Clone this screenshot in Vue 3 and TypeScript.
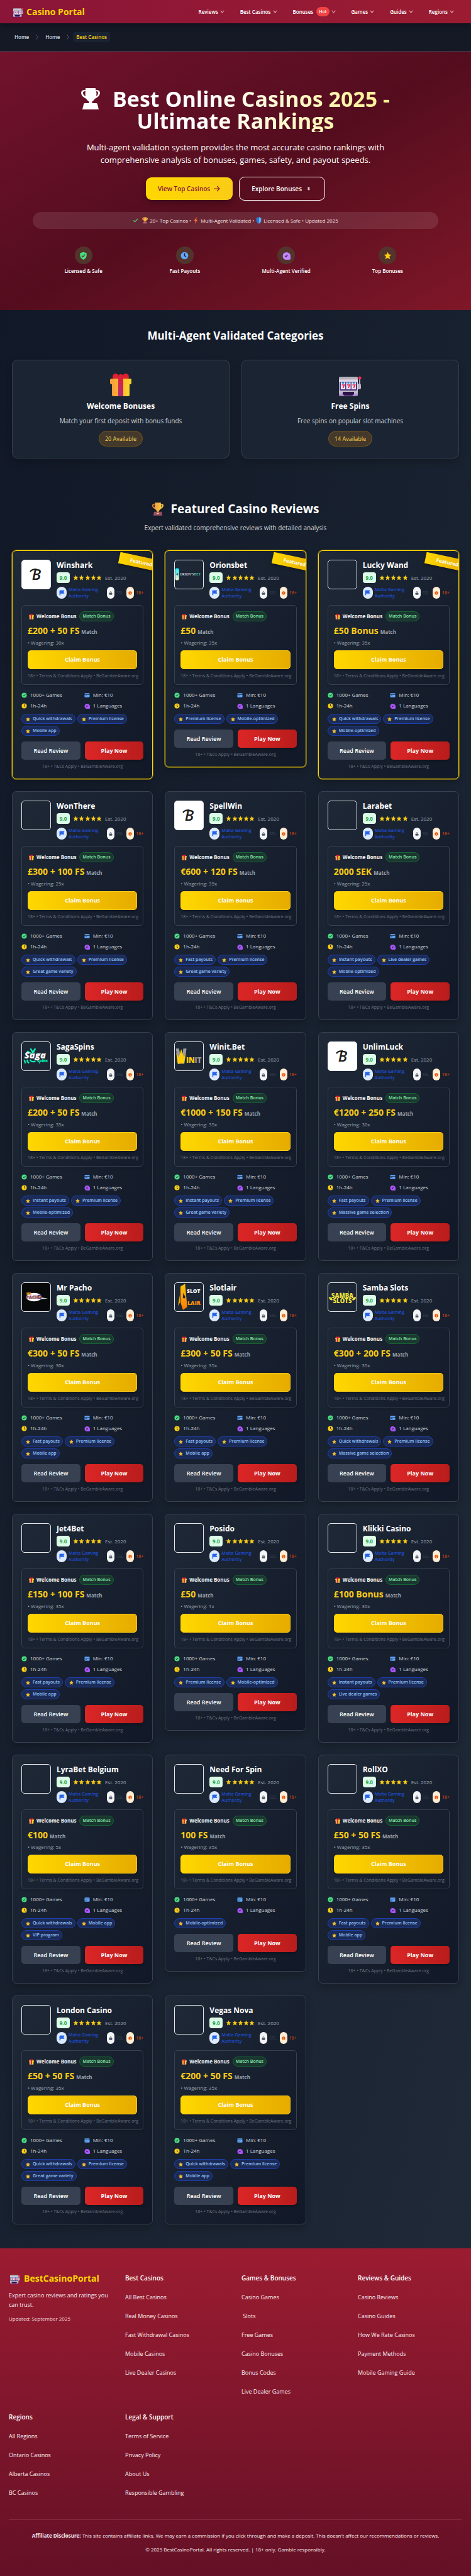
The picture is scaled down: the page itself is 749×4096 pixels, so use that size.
<script setup lang="ts">
type Logo = 'none' | 'script' | 'orion' | 'saga' | 'winit' | 'pacho' | 'slotlair' | 'samba'

interface Casino {
  name: string
  amount: string
  wagering: string
  tags: string[]
  logo: Logo
  featured?: boolean
}

interface FooterColumn {
  title: string
  links: string[]
}

const navItems: { label: string; hot?: boolean }[] = [
  { label: 'Reviews' },
  { label: 'Best Casinos' },
  { label: 'Bonuses', hot: true },
  { label: 'Games' },
  { label: 'Guides' },
  { label: 'Regions' },
]

const trustItems = [
  { icon: 'shield-check', label: 'Licensed & Safe', tone: 'green' },
  { icon: 'clock', label: 'Fast Payouts', tone: 'blue' },
  { icon: 'verified', label: 'Multi-Agent Verified', tone: 'purple' },
  { icon: 'star', label: 'Top Bonuses', tone: 'gold' },
]

const categories = [
  { icon: 'gift', title: 'Welcome Bonuses', text: 'Match your first deposit with bonus funds', count: '20 Available' },
  { icon: 'slot', title: 'Free Spins', text: 'Free spins on popular slot machines', count: '14 Available' },
]

const quick = 'Quick withdrawals'
const fast = 'Fast payouts'
const instant = 'Instant payouts'
const premium = 'Premium license'
const app = 'Mobile app'
const optimized = 'Mobile-optimized'
const variety = 'Great game variety'
const dealers = 'Live dealer games'
const massive = 'Massive game selection'

const casinos: Casino[] = [
  { name: 'Winshark', amount: '£200 + 50 FS', wagering: '30x', tags: [quick, premium, app], logo: 'script', featured: true },
  { name: 'Orionsbet', amount: '£50', wagering: '35x', tags: [premium, optimized], logo: 'orion', featured: true },
  { name: 'Lucky Wand', amount: '£50 Bonus', wagering: '35x', tags: [quick, premium, optimized], logo: 'none', featured: true },
  { name: 'WonThere', amount: '£300 + 100 FS', wagering: '25x', tags: [quick, premium, variety], logo: 'none' },
  { name: 'SpellWin', amount: '€600 + 120 FS', wagering: '35x', tags: [fast, premium, variety], logo: 'script' },
  { name: 'Larabet', amount: '2000 SEK', wagering: '25x', tags: [instant, dealers, optimized], logo: 'none' },
  { name: 'SagaSpins', amount: '£200 + 50 FS', wagering: '35x', tags: [instant, premium, optimized], logo: 'saga' },
  { name: 'Winit.Bet', amount: '€1000 + 150 FS', wagering: '35x', tags: [instant, premium, variety], logo: 'winit' },
  { name: 'UnlimLuck', amount: '€1200 + 250 FS', wagering: '30x', tags: [fast, premium, massive], logo: 'script' },
  { name: 'Mr Pacho', amount: '€300 + 50 FS', wagering: '30x', tags: [fast, premium, app], logo: 'pacho' },
  { name: 'Slotlair', amount: '£300 + 50 FS', wagering: '35x', tags: [fast, premium, app], logo: 'slotlair' },
  { name: 'Samba Slots', amount: '€300 + 200 FS', wagering: '35x', tags: [quick, premium, massive], logo: 'samba' },
  { name: 'Jet4Bet', amount: '£150 + 100 FS', wagering: '35x', tags: [fast, premium, app], logo: 'none' },
  { name: 'Posido', amount: '£50', wagering: '1x', tags: [premium, optimized], logo: 'none' },
  { name: 'Klikki Casino', amount: '£100 Bonus', wagering: '30x', tags: [instant, premium, dealers], logo: 'none' },
  { name: 'LyraBet Belgium', amount: '€100', wagering: '5x', tags: [quick, app, 'VIP program'], logo: 'none' },
  { name: 'Need For Spin', amount: '100 FS', wagering: '35x', tags: [optimized], logo: 'none' },
  { name: 'RollXO', amount: '£50 + 50 FS', wagering: '35x', tags: [fast, premium, app], logo: 'none' },
  { name: 'London Casino', amount: '£50 + 50 FS', wagering: '35x', tags: [quick, premium, variety], logo: 'none' },
  { name: 'Vegas Nova', amount: '€200 + 50 FS', wagering: '35x', tags: [quick, premium, app], logo: 'none' },
]

const footerColumns: FooterColumn[] = [
  { title: 'Best Casinos', links: ['All Best Casinos', 'Real Money Casinos', 'Fast Withdrawal Casinos', 'Mobile Casinos', 'Live Dealer Casinos'] },
  { title: 'Games & Bonuses', links: ['Casino Games', '\u00a0Slots', 'Free Games', 'Casino Bonuses', 'Bonus Codes', 'Live Dealer Games'] },
  { title: 'Reviews & Guides', links: ['Casino Reviews', 'Casino Guides', 'How We Rate Casinos', 'Payment Methods', 'Mobile Gaming Guide'] },
  { title: 'Regions', links: ['All Regions', 'Ontario Casinos', 'Alberta Casinos', 'BC Casinos'] },
  { title: 'Legal & Support', links: ['Terms of Service', 'Privacy Policy', 'About Us', 'Responsible Gambling'] },
]
</script>

<template>
  <div class="page">
    <svg class="sprite" aria-hidden="true">
      <defs>
        <linearGradient id="g-gift" x1="0" x2="1"><stop offset="0" stop-color="#f89a3c" /><stop offset="1" stop-color="#fbd62c" /></linearGradient>
        <linearGradient id="g-ribbon" x1="0" y1="0" x2="0" y2="1"><stop offset="0" stop-color="#e0202f" /><stop offset="1" stop-color="#b52a78" /></linearGradient>
        <linearGradient id="g-slot" x1="0" y1="0" x2="0" y2="1"><stop offset="0" stop-color="#b4b0ba" /><stop offset="0.8" stop-color="#c3bdca" /><stop offset="1" stop-color="#a57bcf" /></linearGradient>
        <linearGradient id="g-cup" x1="0" x2="1"><stop offset="0" stop-color="#f08a3c" /><stop offset="1" stop-color="#fbd840" /></linearGradient>
        <linearGradient id="g-orion" x1="0" y1="0" x2="0" y2="1"><stop offset="0" stop-color="#16efff" /><stop offset="1" stop-color="#fdf3cf" /></linearGradient>
        <linearGradient id="g-lair" x1="0" y1="0" x2="0" y2="1"><stop offset="0" stop-color="#ffc60a" /><stop offset="1" stop-color="#ff7a00" /></linearGradient>
      </defs>
      <symbol id="i-gift" viewBox="0 0 34 36">
        <ellipse cx="9" cy="5" rx="5" ry="5" fill="#e0202f" /><ellipse cx="25" cy="5" rx="5" ry="5" fill="#e0202f" />
        <rect x="3" y="14" width="28" height="22" rx="2" fill="url(#g-gift)" />
        <rect x="0" y="8" width="34" height="9" rx="2" fill="url(#g-gift)" />
        <path d="M13 36V5q0-4 4-4t4 4v31z" fill="url(#g-ribbon)" />
      </symbol>
      <symbol id="i-slot" viewBox="0 0 36 36">
        <path d="M32 8h2v14h-2z" fill="#a8a4b0" /><circle cx="33" cy="7" r="2.5" fill="#ee2e50" />
        <path d="M29 16h4q2 0 2 3v4q0 2-2 2h-4z" fill="#b9b5c0" />
        <rect y="5" width="30" height="31" rx="2" fill="url(#g-slot)" /><rect y="9.500" width="30" height="17" fill="#dcd6e6" />
        <rect x="1" y="13" width="28" height="14" rx="1.500" fill="#4b3a80" />
        <path d="M3 14h7v11H3zM11.500 14h7v11h-7zM20 14h7v11h-7z" fill="#ece7f6" />
        <path d="M5 14h3v2H5zM13.500 14h3v2h-3zM22 14h3v2h-3z" fill="#229ee6" />
        <path d="M4.500 18h4l-2 5M13 18h4l-2 5M21.500 18h4l-2 5" fill="none" stroke="#ee2048" stroke-width="1.700" />
        <path d="M6 29h18v3q-1 3-3 3H9q-2 0-3-3z" fill="#2a1449" />
      </symbol>
      <symbol id="i-cup" viewBox="0 0 30 34">
        <path d="M7 0h16v3h1q6 0 6 5t-8 9q-3 4-5 5l1 3h-6l1-3q-2-1-5-5-8-4-8-9t6-5h1zM6 5q-3 0-3 3t4 5q-1-4 0-8zM24 5q1 4 0 8 3-2 3-5t-3-3z" fill="url(#g-cup)" fill-rule="evenodd" />
        <path d="M5 24h20l2 10H3z" fill="#95506a" /><rect x="12" y="27" width="6" height="3" fill="#fbc83c" />
      </symbol>
      <symbol id="i-cup-plain" viewBox="0 0 30 34">
        <path d="M7 0h16v3h1q6 0 6 5t-8 9q-3 4-5 5l1 2h6q2 0 2 2l2 8H2l2-8q0-2 2-2h6l1-2q-2-1-5-5-8-4-8-9t6-5h1zM6 5q-3 0-3 3t4 5q-1-4 0-8zM24 5q1 4 0 8 3-2 3-5t-3-3z" fill="#fff" fill-rule="evenodd" />
      </symbol>
      <symbol id="i-chevron" viewBox="0 0 8 8"><path d="M1 2l3 4 3-4" fill="none" stroke="currentColor" /></symbol>
      <symbol id="i-next" viewBox="0 0 8 12"><path d="M2 1l4 5-4 5" fill="none" stroke="currentColor" /></symbol>
      <symbol id="i-arrow" viewBox="0 0 12 12"><path d="M1 6h9M6 2l4 4-4 4" fill="none" stroke="currentColor" stroke-width="1.200" /></symbol>
      <symbol id="i-check" viewBox="0 0 20 20"><path d="M3 10l5 5L18 4" fill="none" stroke="currentColor" stroke-width="2.500" /></symbol>
      <symbol id="i-bolt" viewBox="0 0 12 20"><path d="M8 0L1 11h4L3 20l8-12H7z" fill="#f9713a" /></symbol>
      <symbol id="i-shield" viewBox="0 0 16 20"><path d="M8 0l7 3v8q-1 6-7 9z" fill="#54b8f5" /><path d="M8 0L1 3v8q1 6 7 9z" fill="#2c78dc" /></symbol>
      <symbol id="i-shield-check" viewBox="0 0 20 20">
        <path d="M10 1l8 3v6q-1 7-8 10-7-3-8-10V4z" fill="currentColor" /><path d="M6 10l3 3 5-6" fill="none" stroke="#53342c" stroke-width="2" />
      </symbol>
      <symbol id="i-clock" viewBox="0 0 20 20"><circle cx="10" cy="10" r="9" fill="currentColor" /><path d="M10 4v6l4 4" fill="none" stroke="#1d2636" stroke-width="2.200" /></symbol>
      <symbol id="i-verified" viewBox="0 0 20 20">
        <path d="M10 2c6 0 10 4 10 9v6q0 3-3 3h-7C4 20 1 16 1 11S4 2 10 2z" fill="currentColor" /><path d="M7 11l2 3 4-5-2 1z" fill="#2c2140" stroke="#2c2140" />
      </symbol>
      <symbol id="i-star" viewBox="0 0 20 20"><path d="M10 1l2.700 6 6.300.6-4.800 4.200L15.700 19 10 15.400 4.300 19l1.500-7.200L1 7.600 7.300 7z" fill="currentColor" /></symbol>
      <symbol id="i-soft-star" viewBox="0 0 20 20"><path d="M10 2l2.500 5.200 5.500.8-4 4 1 6-5-2.500L5 18l1-6-4-4 5.500-.8z" fill="#f2c230" stroke="#f2c230" stroke-width="2" stroke-linejoin="round" /></symbol>
      <symbol id="i-flag" viewBox="0 0 20 20"><path d="M2 3q0-1 1-1h15l-3 5 3 5H4v6H2z" fill="#2563eb" stroke="#2563eb" stroke-width="1.500" stroke-linejoin="round" /></symbol>
      <symbol id="i-lock" viewBox="0 0 20 20"><rect x="2" y="9" width="16" height="10" rx="2" fill="#4b5563" /><path d="M6 10V6q0-4 4-4t4 4v4" fill="none" stroke="#4b5563" stroke-width="2.500" /></symbol>
      <symbol id="i-info" viewBox="0 0 20 20"><circle cx="10" cy="10" r="9" fill="#ea580c" /><path d="M8 9h3v6M8 15h5M9 5h2" fill="none" stroke="#ffedd5" stroke-width="2" /></symbol>
      <symbol id="i-ok" viewBox="0 0 20 20"><circle cx="10" cy="10" r="9" fill="#4ade80" /><path d="M6 10l3 3 5-6" fill="none" stroke="#172030" stroke-width="2.200" /></symbol>
      <symbol id="i-card" viewBox="0 0 20 20"><path d="M1 5q0-2 2-2h14q2 0 2 2v2H1zM1 9h18v6q0 2-2 2H3q-2 0-2-2z" fill="#60a5fa" /><path d="M4 12h5" stroke="#1d3a68" stroke-width="2" /></symbol>
    </svg>

    <header class="topbar">
      <a class="brand" href="#"><svg class="brand-icon"><use href="#i-slot" /></svg>Casino Portal</a>
      <nav class="menu" aria-label="Main">
        <button v-for="item in navItems" :key="item.label" type="button" class="menu-item">
          {{ item.label }}
          <span v-if="item.hot" class="hot">Hot</span>
          <svg class="chevron"><use href="#i-chevron" /></svg>
        </button>
      </nav>
    </header>

    <nav class="crumbs" aria-label="Breadcrumb">
      <a href="#">Home</a>
      <svg><use href="#i-next" /></svg>
      <a href="#">Home</a>
      <svg><use href="#i-next" /></svg>
      <span class="current">Best Casinos</span>
    </nav>

    <section class="hero">
      <h1><svg class="hero-cup"><use href="#i-cup-plain" /></svg>Best Online Casinos 2025 - Ultimate Rankings</h1>
      <p class="lead">Multi-agent validation system provides the most accurate casino rankings with comprehensive analysis of bonuses, games, safety, and payout speeds.</p>
      <div class="hero-actions">
        <a class="cta solid" href="#">View Top Casinos <svg class="cta-icon"><use href="#i-arrow" /></svg></a>
        <a class="cta outline" href="#">Explore Bonuses <span class="coin">$</span></a>
      </div>
      <p class="trust-bar">
        <svg class="tick"><use href="#i-check" /></svg>
        <svg><use href="#i-cup" /></svg>20+ Top Casinos •
        <svg><use href="#i-bolt" /></svg>Multi-Agent Validated •
        <svg><use href="#i-shield" /></svg>Licensed &amp; Safe • Updated 2025
      </p>
      <ul class="trust-grid">
        <li v-for="item in trustItems" :key="item.label">
          <span class="orb" :class="item.tone"><svg><use :href="'#i-' + item.icon" /></svg></span>
          {{ item.label }}
        </li>
      </ul>
    </section>

    <main class="content">
      <h2 class="cat-title">Multi-Agent Validated Categories</h2>
      <div class="cat-grid">
        <a v-for="cat in categories" :key="cat.title" class="cat" href="#">
          <svg class="cat-icon"><use :href="'#i-' + cat.icon" /></svg>
          <h3>{{ cat.title }}</h3>
          <p>{{ cat.text }}</p>
          <span class="count">{{ cat.count }}</span>
        </a>
      </div>

      <h2 class="review-title"><svg><use href="#i-cup" /></svg>Featured Casino Reviews</h2>
      <p class="review-sub">Expert validated comprehensive reviews with detailed analysis</p>

      <div class="reviews">
        <article v-for="c in casinos" :key="c.name" class="review" :class="{ featured: c.featured }">
          <div v-if="c.featured" class="ribbon">Featured</div>
          <div class="head">
            <div class="logo" :class="c.logo">
              <svg v-if="c.logo === 'script'" viewBox="0 0 80 80">
                <text x="41" y="55" text-anchor="middle" font-size="42" font-style="italic" font-weight="600" fill="#1c1c1c">B</text>
                <path d="M24 31q4-6 16-6" fill="none" stroke="#1c1c1c" stroke-width="4" stroke-linecap="round" />
              </svg>
              <svg v-else-if="c.logo === 'orion'" viewBox="0 0 80 80">
                <rect x="1" y="22" width="11" height="34" rx="5" fill="url(#g-orion)" />
                <path d="M7 34l1 4 3 1-3 1-1 4-1-4-3-1 3-1z" fill="#12202e" />
                <text x="14" y="43" font-size="10" font-family="Liberation Serif, serif" fill="#fff">ORION’S<tspan fill="#6fe0d8">BET</tspan></text>
              </svg>
              <svg v-else-if="c.logo === 'saga'" viewBox="0 0 80 80">
                <path d="M24 18l7 12M14 26l12 6M38 18q-6 6-5 12M6 50l4 10M16 50q-3 6 4 9M22 50q6 8 16 4" fill="none" stroke="#06f5b4" stroke-width="4" />
                <text x="37" y="46" text-anchor="middle" font-size="26" font-style="italic" font-weight="800" fill="#fff">Saga</text>
                <text x="58" y="56" text-anchor="middle" font-size="12" font-style="italic" font-weight="800" fill="#06f5b4">spins</text>
              </svg>
              <svg v-else-if="c.logo === 'winit'" viewBox="0 0 80 80">
                <path d="M3 18h9l6 35 1 8-10 1z" fill="#9b9b9b" /><path d="M24 18h9l-6 43h-9z" fill="#9b9b9b" />
                <path d="M4 30l7 14 7-24 8 23 5-12-5 30-8-1-10 1z" fill="#ffcd05" />
                <text x="32" y="59" font-size="21" font-weight="800" fill="#ffcd05">IN</text>
                <text x="56" y="59" font-size="21" font-weight="800" fill="#9b9b9b">IT</text>
              </svg>
              <svg v-else-if="c.logo === 'pacho'" viewBox="0 0 80 80">
                <ellipse cx="34" cy="40" rx="22" ry="12" fill="#fff" /><path d="M50 40l23 4-20 2z" fill="#ddd" />
                <circle cx="50" cy="39" r="6" fill="#53308c" /><circle cx="50" cy="39" r="3" fill="#f49b24" />
                <text x="20" y="34" text-anchor="middle" font-size="8" font-weight="800" fill="#f49b24">MR.</text>
                <text x="29" y="45" text-anchor="middle" font-size="13" font-weight="800" fill="#f08c1c" stroke="#53308c" stroke-width="1">PACH</text>
              </svg>
              <svg v-else-if="c.logo === 'slotlair'" viewBox="0 0 80 80">
                <path d="M16 10l13-8 6 66-12 8-7-22z" fill="url(#g-lair)" /><path d="M14 34v22l-5 9z" fill="#ffbd0a" />
                <path d="M24 28l6 12-3 4-4-2z" fill="#18202e" />
                <text x="53" y="28" text-anchor="middle" font-size="15" font-weight="800" fill="#fff">SLOT</text>
                <text x="54" y="62" text-anchor="middle" font-size="16" font-weight="800" fill="#ff9407">LAIR</text>
              </svg>
              <svg v-else-if="c.logo === 'samba'" viewBox="0 0 80 80">
                <path d="M2 40q8 0 10 8-8 2-10-8zM78 40q-8 0-10 8 8 2 10-8zM8 30l4 3M32 25l5 3M44 26v3M58 23l-2 6M70 31l2 2" fill="#f0e13c" stroke="#f0e13c" />
                <text x="40" y="42" text-anchor="middle" font-size="17" font-weight="800" fill="#f0e13c">SAMBA</text>
                <text x="40" y="56" text-anchor="middle" font-size="17" font-weight="800" fill="#f0e13c">SLOTS</text>
              </svg>
            </div>
            <div class="info">
              <h3>{{ c.name }}</h3>
              <div class="rating">
                <span class="score">9.0</span>
                <span class="stars"><svg v-for="n in 5" :key="n"><use href="#i-star" /></svg></span>
                <span class="est">Est. 2020</span>
              </div>
              <div class="badges">
                <span class="badge license"><i class="chip"><svg><use href="#i-flag" /></svg></i><span>Malta Gaming Authority</span></span>
                <span class="badge ssl"><i class="chip"><svg><use href="#i-lock" /></svg></i>SSL</span>
                <span class="badge adult"><i class="chip"><svg><use href="#i-info" /></svg></i>18+</span>
              </div>
            </div>
          </div>

          <div class="bonus">
            <div class="bonus-head"><svg><use href="#i-gift" /></svg><strong>Welcome Bonus</strong><span class="match">Match Bonus</span></div>
            <div class="amount">{{ c.amount }}<small>Match</small></div>
            <div class="wagering">• Wagering: {{ c.wagering }}</div>
            <a class="claim" href="#">Claim Bonus</a>
            <p class="terms">18+ • Terms &amp; Conditions Apply • BeGambleAware.org</p>
          </div>

          <ul class="stats">
            <li><svg><use href="#i-ok" /></svg>1000+ Games</li>
            <li><svg><use href="#i-card" /></svg>Min: €10</li>
            <li class="gold"><svg><use href="#i-clock" /></svg>1h-24h</li>
            <li class="violet"><svg><use href="#i-verified" /></svg>1 Languages</li>
          </ul>
          <ul class="tags">
            <li v-for="t in c.tags" :key="t"><svg><use href="#i-soft-star" /></svg>{{ t }}</li>
          </ul>
          <div class="actions">
            <a class="read" href="#">Read Review</a>
            <a class="play" href="#">Play Now</a>
          </div>
          <p class="terms">18+ • T&amp;Cs Apply • BeGambleAware.org</p>
        </article>
      </div>
    </main>

    <footer class="footer">
      <div class="footer-grid">
        <div>
          <a class="footer-brand" href="#"><svg class="brand-icon"><use href="#i-slot" /></svg>BestCasinoPortal</a>
          <p class="about">Expert casino reviews and ratings you can trust.</p>
          <p class="updated">Updated: September 2025</p>
        </div>
        <div v-for="col in footerColumns" :key="col.title">
          <h4>{{ col.title }}</h4>
          <ul class="links">
            <li v-for="l in col.links" :key="l"><a href="#">{{ l }}</a></li>
          </ul>
        </div>
      </div>
      <div class="legal">
        <p><strong>Affiliate Disclosure:</strong> This site contains affiliate links. We may earn a commission if you click through and make a deposit. This doesn't affect our recommendations or reviews.</p>
        <p>© 2025 BestCasinoPortal. All rights reserved. | 18+ only. Gamble responsibly.</p>
      </div>
    </footer>
  </div>
</template>

<style>
body {
  margin: 0;
  background: #111827;
}
</style>

<style scoped>
.page {
  font-family: "Open Sans", "Noto Sans", sans-serif;
  font-size: 8px;
  line-height: 12px;
  color: #fff;
}
.page * {
  box-sizing: border-box;
}
.sprite {
  position: absolute;
  width: 0;
  height: 0;
}
h1, h2, h3, h4, p, ul {
  margin: 0;
  padding: 0;
}
ul {
  list-style: none;
}
a {
  color: inherit;
  text-decoration: none;
}
button {
  font: inherit;
  color: inherit;
  background: none;
  border: 0;
  padding: 0;
}
svg {
  flex: none;
}

.topbar {
  position: relative;
  display: flex;
  align-items: center;
  justify-content: space-between;
  height: 37px;
  padding: 0 27px 0 21px;
  background: linear-gradient(to right, #8a1538, #9b1c31);
  box-shadow: 0 3px 9px rgba(0, 0, 0, 0.3);
}
.brand {
  display: flex;
  align-items: center;
  gap: 5px;
  font-size: 14px;
  line-height: 20px;
  font-weight: 700;
  color: #ffd700;
}
.brand-icon {
  width: 16px;
  height: 16px;
}
.menu {
  display: flex;
  gap: 25px;
}
.menu-item {
  display: flex;
  align-items: center;
  gap: 3px;
  font-weight: 600;
}
.hot {
  margin-left: 2px;
  padding: 0 4px;
  line-height: 15px;
  border-radius: 8px;
  background: #ef4444;
  font-size: 7px;
}
.chevron {
  width: 7px;
  height: 7px;
}
.crumbs {
  display: flex;
  align-items: center;
  height: 45px;
  padding: 0 23px;
  gap: 10px;
  background: #151926;
  border-bottom: 1px solid #374151;
  font-weight: 600;
  color: #d1d5db;
}
.crumbs svg {
  width: 6px;
  height: 10px;
  color: #6b7280;
}
.crumbs svg + .current {
  margin-left: -5px;
}
.current {
  padding: 2px 5px;
  border-radius: 4px;
  background: #1a2331;
  color: #facc15;
}

.hero {
  display: flex;
  flex-direction: column;
  align-items: center;
  min-height: 411px;
  padding: 58px 52px 0;
  background: linear-gradient(to bottom right, #72122d, #540d1e 50%, #7f1728);
  text-align: center;
}
h1 {
  max-width: 524px;
  font-size: 34px;
  line-height: 35px;
  font-weight: 700;
  color: transparent;
  background: linear-gradient(to right, #fff 40%, #fef08a);
  background-clip: text;
  -webkit-background-clip: text;
}
.hero-cup {
  width: 30px;
  height: 34px;
  margin-right: 20px;
  vertical-align: -4px;
}
.lead {
  max-width: 500px;
  margin-top: 14px;
  font-size: 13px;
  line-height: 20px;
}
.hero-actions {
  display: flex;
  align-items: center;
  gap: 10px;
  margin-top: 17px;
}
.cta {
  display: flex;
  align-items: center;
  gap: 5px;
  height: 36px;
  padding: 0 19px;
  border-radius: 9px;
  font-size: 10px;
  font-weight: 600;
}
.solid {
  background: linear-gradient(to right, #ffd700, #facc15);
  color: #8a1538;
  box-shadow: 0 4px 8px rgba(0, 0, 0, 0.25);
}
.outline {
  height: 38px;
  border: 1px solid #fff;
}
.cta-icon {
  width: 12px;
  height: 12px;
}
.coin {
  width: 12px;
  font-size: 7px;
  text-align: center;
}
.trust-bar {
  display: flex;
  align-items: center;
  justify-content: center;
  align-self: stretch;
  gap: 3px;
  height: 27px;
  margin-top: 18px;
  border-radius: 14px;
  background: rgba(255, 255, 255, 0.1);
  color: #f5e6e8;
}
.trust-bar svg {
  width: 9px;
  height: 11px;
}
.trust-bar .tick {
  margin-right: 3px;
  color: #4ade80;
}
.trust-grid {
  display: grid;
  grid-template-columns: repeat(4, 1fr);
  align-self: stretch;
  margin-top: 28px;
  font-weight: 600;
}
.trust-grid li {
  display: flex;
  flex-direction: column;
  align-items: center;
  gap: 5px;
}
.orb {
  display: grid;
  place-items: center;
  width: 28px;
  height: 28px;
  border-radius: 50%;
  background: #53342c;
}
.orb svg {
  width: 13px;
  height: 13px;
}
.green { color: #4ade80; }
.blue { color: #60a5fa; }
.purple { color: #c084fc; }
.orb.gold { color: #facc15; }

.content {
  padding: 28px 19px 38px;
  background: linear-gradient(to bottom right, #111827, #18212f 50%, #1f2937);
}
.cat-title {
  font-size: 17px;
  line-height: 25px;
  text-align: center;
}
.cat-grid {
  display: grid;
  grid-template-columns: 1fr 1fr;
  gap: 19px;
  margin-top: 26px;
}
.cat {
  display: flex;
  flex-direction: column;
  align-items: center;
  padding: 21px 14px 18px;
  border: 1px solid #374151;
  border-radius: 9px;
  background: #1b2432;
  box-shadow: 0 6px 12px rgba(0, 0, 0, 0.2);
}
.cat-icon {
  width: 36px;
  height: 36px;
}
.cat h3 {
  margin-top: 8px;
  font-size: 12px;
  line-height: 16px;
}
.cat p {
  margin-top: 8px;
  font-size: 10px;
  line-height: 14px;
  color: #d1d5db;
}
.count {
  margin-top: 9px;
  padding: 0 9px;
  border: 1px solid #7a5714;
  border-radius: 13px;
  background: #44392b;
  font-size: 9px;
  line-height: 23px;
  color: #fcd34d;
}
.review-title {
  display: flex;
  align-items: center;
  justify-content: center;
  gap: 12px;
  margin-top: 67px;
  font-size: 19px;
  line-height: 26px;
}
.review-title svg {
  width: 18px;
  height: 21px;
}
.review-sub {
  margin-top: 9px;
  font-size: 10px;
  line-height: 16px;
  text-align: center;
  color: #d1d5db;
}
.reviews {
  display: grid;
  grid-template-columns: repeat(3, 1fr);
  align-items: start;
  gap: 19px;
  margin-top: 28px;
}
.review {
  position: relative;
  overflow: hidden;
  padding: 14px 14px 13px;
  border: 1px solid #374151;
  border-radius: 7px;
  background: linear-gradient(to bottom right, #1f2937, #111827);
  box-shadow: 0 6px 12px rgba(0, 0, 0, 0.2);
}
.review.featured {
  border-color: #ffd700;
  box-shadow: 0 0 0 1px rgba(255, 215, 0, 0.4), 0 6px 12px rgba(0, 0, 0, 0.2);
}
.ribbon {
  position: absolute;
  top: 9px;
  right: -18px;
  width: 71px;
  line-height: 18px;
  text-align: center;
  font-weight: 700;
  background: linear-gradient(to right, #ffd700, #e6a800);
  box-shadow: 0 2px 4px rgba(0, 0, 0, 0.3);
  transform: rotate(12deg);
}
.head {
  display: flex;
  align-items: flex-start;
  gap: 9px;
}
.logo {
  flex: none;
  width: 47px;
  height: 47px;
  border: 1px solid #e5e7eb;
  border-radius: 5px;
  overflow: hidden;
}
.logo svg {
  display: block;
  width: 100%;
  height: 100%;
}
.logo.script {
  background: #fff;
}
.logo.pacho {
  background: #07080a;
}
.info {
  flex: 1;
  min-width: 0;
}
.info h3 {
  font-size: 12px;
  line-height: 18px;
  white-space: nowrap;
}
.rating {
  display: flex;
  align-items: center;
  gap: 5px;
  margin-top: 2px;
}
.score {
  width: 21px;
  border-radius: 4px;
  background: #dcfce7;
  color: #16a34a;
  font-weight: 700;
  line-height: 17px;
  text-align: center;
}
.stars {
  display: flex;
  justify-content: space-between;
  width: 46px;
  color: #facc15;
}
.stars svg {
  width: 9px;
  height: 9px;
}
.est {
  color: #9ca3af;
}
.badges {
  display: flex;
  align-items: center;
  height: 19px;
  gap: 5px;
  margin-top: 6px;
  font-size: 7px;
  font-weight: 600;
  line-height: 10px;
}
.badge {
  display: flex;
  align-items: center;
  gap: 3px;
}
.chip {
  display: grid;
  place-items: center;
  flex: none;
  width: 12px;
  height: 19px;
  border-radius: 6px;
  background: #f3f4f6;
}
.chip svg {
  width: 6px;
  height: 6px;
}
.license {
  flex: 1;
  color: #1d4ed8;
}
.license .chip {
  width: 16px;
  border-radius: 8px;
  background: #dbeafe;
}
.license .chip svg {
  width: 9px;
  height: 9px;
}
.ssl {
  color: #374151;
  font-weight: 400;
}
.adult {
  color: #c2410c;
}
.adult .chip {
  background: #ffedd5;
}
.bonus {
  margin-top: 10px;
  padding: 9px 9px 7px;
  border: 1px solid #374151;
  border-radius: 5px;
  box-shadow: 0 2px 4px rgba(0, 0, 0, 0.15);
}
.bonus-head {
  display: flex;
  align-items: center;
  height: 16px;
}
.bonus-head svg {
  width: 8px;
  height: 9px;
  margin: 0 4px 0 2px;
}
.bonus-head strong {
  color: #f3f4f6;
}
.match {
  margin-left: 5px;
  padding: 0 4px;
  border: 1px solid #166534;
  border-radius: 8px;
  background: #1a3730;
  color: #86efac;
  font-size: 7px;
  font-weight: 600;
  line-height: 14px;
}
.amount {
  display: flex;
  align-items: baseline;
  gap: 3px;
  height: 20px;
  margin-top: 5px;
  font-size: 14px;
  line-height: 20px;
  font-weight: 700;
  color: #facc15;
  white-space: nowrap;
}
.amount small {
  font-size: 8px;
  line-height: 10px;
  color: #9ca3af;
}
.wagering {
  margin-top: 3px;
  color: #9ca3af;
}
.claim {
  display: block;
  margin-top: 6px;
  border: 1px solid #facc15;
  border-radius: 5px;
  background: linear-gradient(to right, #ffd700, #e6ac00);
  font-size: 9px;
  font-weight: 700;
  line-height: 28px;
  text-align: center;
  box-shadow: 0 2px 4px rgba(0, 0, 0, 0.3);
}
.terms {
  margin-top: 5px;
  font-size: 7px;
  text-align: center;
  color: #6b7280;
  white-space: nowrap;
}
.stats {
  display: grid;
  grid-template-columns: 1fr 1fr;
  column-gap: 5px;
  row-gap: 5px;
  margin-top: 10px;
  color: #d1d5db;
}
.stats li {
  display: flex;
  align-items: center;
  gap: 5px;
}
.stats svg {
  width: 9px;
  height: 9px;
}
.stats .gold svg {
  color: #facc15;
}
.stats .violet svg {
  color: #a855f7;
}
.tags {
  display: flex;
  flex-wrap: wrap;
  gap: 3px;
  margin-top: 7px;
}
.tags li {
  display: flex;
  align-items: center;
  gap: 4px;
  padding: 0 4px 0 6px;
  border: 1px solid #1e40af;
  border-radius: 8px;
  background: #1b2b58;
  color: #93c5fd;
  font-size: 7px;
  font-weight: 600;
  line-height: 14px;
}
.tags svg {
  width: 7px;
  height: 7px;
}
.actions {
  display: grid;
  grid-template-columns: 1fr 1fr;
  gap: 7px;
  margin-top: 9px;
  font-size: 9px;
  font-weight: 600;
  line-height: 29px;
  text-align: center;
}
.actions a {
  border-radius: 5px;
}
.read {
  background: #374151;
}
.play {
  background: linear-gradient(to right, #dc2626, #b91c1c);
  font-weight: 700;
  box-shadow: 0 2px 4px rgba(0, 0, 0, 0.3);
}

.footer {
  padding: 38px 14px 36px;
  background: linear-gradient(to bottom, #9b1c31, #641026);
  font-size: 9px;
}
.footer-grid {
  display: grid;
  grid-template-columns: repeat(4, 1fr);
  column-gap: 19px;
  row-gap: 16px;
}
.footer-brand {
  display: flex;
  align-items: center;
  gap: 6px;
  padding: 0 0 0 2px;
  font-size: 14px;
  line-height: 20px;
  font-weight: 700;
  color: #ffd700;
}
.about {
  margin-top: 9px;
  line-height: 15px;
  color: #f9eef0;
}
.updated {
  margin-top: 9px;
  font-size: 8px;
  color: #f0d9dd;
}
h4 {
  font-size: 10px;
  font-weight: 600;
  line-height: 18px;
}
.links {
  margin-top: 7px;
}
.links li {
  line-height: 30px;
  color: #f9eef0;
}
.legal {
  margin-top: 27px;
  padding-top: 19px;
  border-top: 1px solid #8a2a40;
  font-size: 8px;
  text-align: center;
  color: #f9eef0;
}
.legal p + p {
  margin-top: 10px;
}
</style>
